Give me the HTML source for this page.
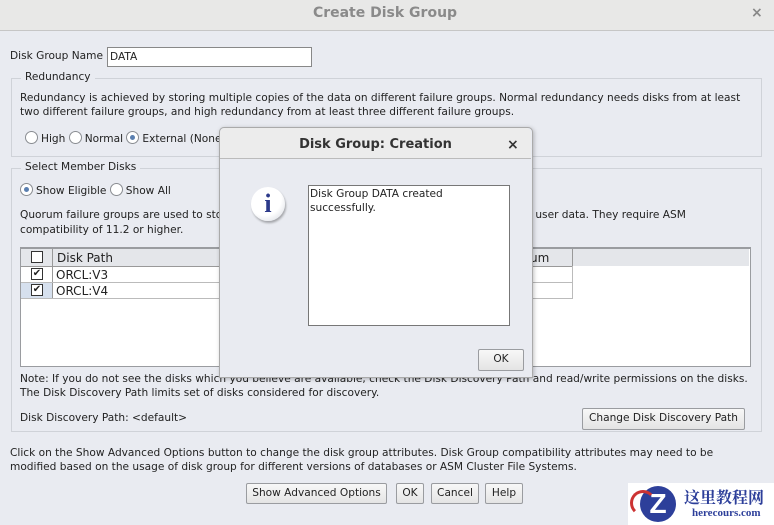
<!DOCTYPE html>
<html><head><style>
body{margin:0;width:774px;height:525px;overflow:hidden;background:#e9ebf1;font-family:"DejaVu Sans","Liberation Sans",sans-serif;font-size:10.6px;color:#222;position:relative}
.a{position:absolute;white-space:nowrap}
.fs{position:absolute;border:1px solid #cfd2d8}
.lg{position:absolute;background:#e9ebf1;padding:0 4px}
.btn{position:absolute;border:1px solid #9a9ca0;border-radius:2px;background:linear-gradient(#f8f8f8,#e4e4e4);text-align:center;line-height:19px;box-sizing:border-box}
.rd{display:inline-block;width:11px;height:11px;border:1px solid #8a8d92;border-radius:50%;background:#fff;vertical-align:-2px;margin-right:3px;position:relative}
.rd.on:after{content:"";position:absolute;left:3px;top:3px;width:5px;height:5px;border-radius:50%;background:#5a7fb0}
.cb{position:absolute;width:10px;height:10px;border:1px solid #333;background:#fff;font-size:10px;line-height:10px;text-align:center}
</style></head><body>
<div class="a" style="left:0;top:0;width:774px;height:30px;background:#e8e8e7;border-bottom:1px solid #c6c6c6"></div>
<div class="a" style="left:0;top:5px;width:770px;text-align:center;font-size:14px;font-weight:bold;color:#8a8a8a">Create Disk Group</div>
<div class="a" style="left:751px;top:5px;font-size:14px;color:#888;font-weight:bold">×</div>

<div class="a" style="left:10px;top:50px">Disk Group Name</div>
<div class="a" style="left:107px;top:47px;width:205px;height:20px;border:1px solid #888;background:#fff;line-height:18px;padding-left:2px;box-sizing:border-box">DATA</div>

<div class="fs" style="left:11px;top:78px;width:749px;height:77px"></div>
<div class="lg" style="left:21px;top:71px">Redundancy</div>
<div class="a" style="left:20px;top:91px;line-height:14px">Redundancy is achieved by storing multiple copies of the data on different failure groups. Normal redundancy needs disks from at least<br>two different failure groups, and high redundancy from at least three different failure groups.</div>
<div class="a" style="left:25px;top:131px"><span class="rd"></span>High <span class="rd"></span>Normal <span class="rd on"></span>External (None)</div>

<div class="fs" style="left:11px;top:168px;width:749px;height:262px"></div>
<div class="lg" style="left:21px;top:161px">Select Member Disks</div>
<div class="a" style="left:20px;top:183px"><span class="rd on"></span>Show Eligible <span class="rd"></span>Show All</div>
<div class="a" style="left:20px;top:208px;line-height:15px">Quorum failure groups are used to store voting files in extended clusters and do not contain any user data. They require ASM<br>compatibility of 11.2 or higher.</div>

<div class="a" style="left:20px;top:247px;width:729px;height:117px;background:#fff;border:1px solid #9a9ca0;border-top:2px solid #9a9ca0"></div>
<div class="a" style="left:21px;top:249px;width:728px;height:17px;background:#e4e6ea"></div>
<div class="a" style="left:21px;top:249px;width:551px;height:17px;border-bottom:1px solid #999;border-right:1px solid #999"></div>
<div class="a" style="left:52px;top:249px;width:1px;height:49px;background:#999"></div>
<div class="a" style="left:21px;top:282px;width:551px;height:1px;background:#bbb"></div>
<div class="a" style="left:21px;top:298px;width:552px;height:1px;background:#bbb"></div>
<div class="a" style="left:572px;top:266px;width:1px;height:32px;background:#bbb"></div>
<div class="a" style="left:21px;top:283px;width:31px;height:15px;background:#d6e0ee"></div>
<div class="cb" style="left:31px;top:251px"></div>
<div class="cb" style="left:31px;top:268px">✔</div>
<div class="cb" style="left:31px;top:284px">✔</div>
<div class="a" style="left:57px;top:251px;font-size:12px">Disk Path</div>
<div class="a" style="left:56px;top:268px;font-size:12px">ORCL:V3</div>
<div class="a" style="left:56px;top:284px;font-size:12px">ORCL:V4</div>
<div class="a" style="left:530px;top:251px;font-size:12px">um</div>

<div class="a" style="left:20px;top:372px;line-height:14px">Note: If you do not see the disks which you believe are available, check the Disk Discovery Path and read/write permissions on the disks.<br>The Disk Discovery Path limits set of disks considered for discovery.</div>
<div class="a" style="left:20px;top:412px">Disk Discovery Path: &lt;default&gt;</div>
<div class="btn" style="left:582px;top:408px;width:163px;height:22px">Change Disk Discovery Path</div>

<div class="a" style="left:10px;top:446px;line-height:14px">Click on the Show Advanced Options button to change the disk group attributes. Disk Group compatibility attributes may need to be<br>modified based on the usage of disk group for different versions of databases or ASM Cluster File Systems.</div>
<div class="btn" style="left:246px;top:483px;width:141px;height:21px">Show Advanced Options</div>
<div class="btn" style="left:396px;top:483px;width:28px;height:21px">OK</div>
<div class="btn" style="left:431px;top:483px;width:48px;height:21px">Cancel</div>
<div class="btn" style="left:485px;top:483px;width:38px;height:21px">Help</div>

<div class="a" style="left:219px;top:127px;width:312px;height:249px;background:#e9ebf1;border:1px solid #aaa;border-radius:5px 5px 0 0;box-shadow:1px 1px 4px rgba(0,0,0,.25)"></div>
<div class="a" style="left:220px;top:128px;width:311px;height:30px;background:#ececec;border-bottom:1px solid #bbb;border-radius:5px 5px 0 0"></div>
<div class="a" style="left:220px;top:137px;width:311px;text-align:center;font-size:13px;font-weight:bold;color:#333">Disk Group: Creation</div>
<div class="a" style="left:507px;top:137px;font-size:14px;font-weight:bold;color:#333">×</div>
<div class="a" style="left:251px;top:187px;width:34px;height:34px;border-radius:50%;background:radial-gradient(circle at 40% 35%,#fff 55%,#cfd3dc);box-shadow:1px 2px 2px rgba(0,0,0,.3);text-align:center;font:bold 26px/34px 'Liberation Serif',serif;color:#2c3a8a">i</div>
<div class="a" style="left:308px;top:185px;width:202px;height:141px;box-sizing:border-box;border:1px solid #777;background:#fff;padding:1px 1px;line-height:14px;white-space:normal">Disk Group DATA created successfully.</div>
<div class="btn" style="left:478px;top:349px;width:46px;height:22px">OK</div>

<div class="a" style="left:628px;top:483px;width:146px;height:42px;background:#fff"></div>
<div class="a" style="left:640px;top:486px;width:36px;height:36px;border-radius:50%;background:#2d3f9a;color:#fff;font:bold 28px/36px 'Liberation Sans',sans-serif;text-align:center">Z</div>
<div class="a" style="left:630px;top:490px;width:20px;height:20px;border:3px solid #c33;border-radius:50%;border-right-color:transparent;border-bottom-color:transparent"></div>
<div class="a" style="left:684px;top:485px;font:bold 16px 'Noto Serif CJK SC',serif;color:#2d3f9a">这里教程网</div>
<div class="a" style="left:692px;top:507px;font:bold 11px 'Liberation Serif',serif;color:#2d3f9a">herecours.com</div>
</body></html>
